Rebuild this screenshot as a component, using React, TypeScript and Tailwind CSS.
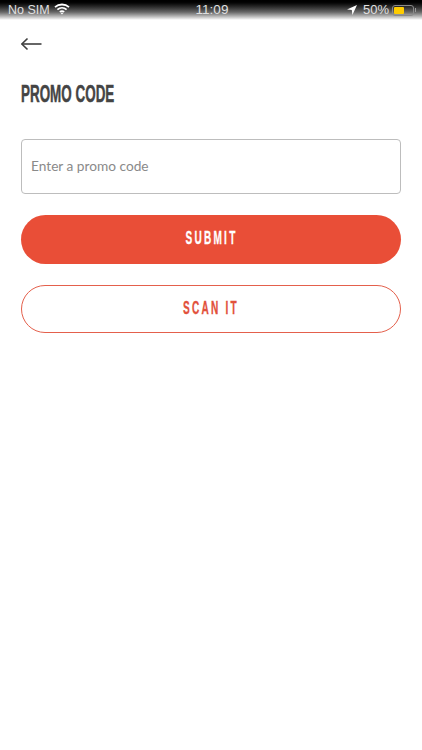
const condensed = { fontFamily: '"Liberation Sans", sans-serif' };

function Wifi() {
  return (
    <svg width="16" height="12" viewBox="0 0 16 12" className="ml-[4px] -mt-[2px]" fill="none" stroke="#fff">
      <path d="M1 4.2C5 .6 11 .6 15 4.2" strokeWidth="1.8" />
      <path d="M3.4 6.6c2.7-2.3 6.5-2.3 9.2 0" strokeWidth="1.8" />
      <path d="M5.8 8.9c1.3-1 3.1-1 4.4 0" strokeWidth="1.8" />
      <path d="M8 11.6 6.6 10.1c.8-.5 2-.5 2.8 0z" fill="#fff" stroke="none" />
    </svg>
  );
}

function Battery() {
  return (
    <div className="flex items-center ml-[3px]">
      <div className="w-[22px] h-[11px] rounded-[3px] border border-[#8a8a8a] p-px flex">
        <div className="w-[10px] bg-[#ffcc00] rounded-[1px]" />
      </div>
      <div className="w-px h-[4px] bg-[#999] ml-px" />
    </div>
  );
}

export default function App() {
  return (
    <div className="w-[422px] h-[750px] bg-white overflow-hidden" style={{ fontFamily: '"Liberation Sans", sans-serif' }}>
      <div className="h-[20px] bg-gradient-to-b from-black via-[#666] via-[60%] to-[#fff] flex items-center justify-between pl-[8px] pr-[6px] text-[12.5px] text-[#e0e0e0]">
        <div className="flex items-center w-[130px]">
          <span>No SIM</span>
          <Wifi />
        </div>
        <span className="text-[13.5px]">11:09</span>
        <div className="flex items-center w-[130px] justify-end">
          <svg width="10" height="10" viewBox="0 0 10 10" className="mr-[6px]"><path d="M10 0 0 4.6l4.8.5.6 4.9z" fill="#fff" /></svg>
          <span className="text-[13px]">50%</span>
          <Battery />
        </div>
      </div>

      <div className="px-[21px]">
        <div className="pt-[17px] h-[46px]">
          <svg width="21" height="14" viewBox="0 0 21 14" fill="none" stroke="#3f3f3f" strokeWidth="1.6">
            <path d="M0.8 7H20.5" />
            <path d="M6.5 1.5 0.9 7 6.5 12.5" />
          </svg>
        </div>
        <h1 className="mt-[15px] h-[26px] text-[24px] leading-[26px] font-bold text-[#444] whitespace-nowrap origin-left scale-x-[0.56] [-webkit-text-stroke:0.5px_#444]" style={condensed}>
          PROMO CODE
        </h1>
        <div className="mt-[32px] h-[55px] w-[380px] rounded-[4px] border border-[#bdbdbd] flex items-center pl-[9px] text-[13.7px] text-[#8a8a8a]" style={{ fontFamily: 'Lato, sans-serif' }}>
          Enter a promo code
        </div>
        <button className="mt-[21px] h-[49px] w-[380px] rounded-full bg-[#e94e37] flex items-center justify-center text-white text-[18px] font-bold tracking-[4px]" style={condensed}>
          <span className="inline-block -mt-[2px] scale-x-[0.56] whitespace-nowrap [-webkit-text-stroke:0.3px_#fff]">SUBMIT</span>
        </button>
        <button className="mt-[21px] h-[48px] w-[380px] rounded-full border border-[#e4604c] bg-white flex items-center justify-center text-[#e2513b] text-[18px] font-bold tracking-[4px]" style={condensed}>
          <span className="inline-block -mt-[2px] scale-x-[0.56] whitespace-nowrap [-webkit-text-stroke:0.3px_#e2513b]">SCAN IT</span>
        </button>
      </div>
    </div>
  );
}
